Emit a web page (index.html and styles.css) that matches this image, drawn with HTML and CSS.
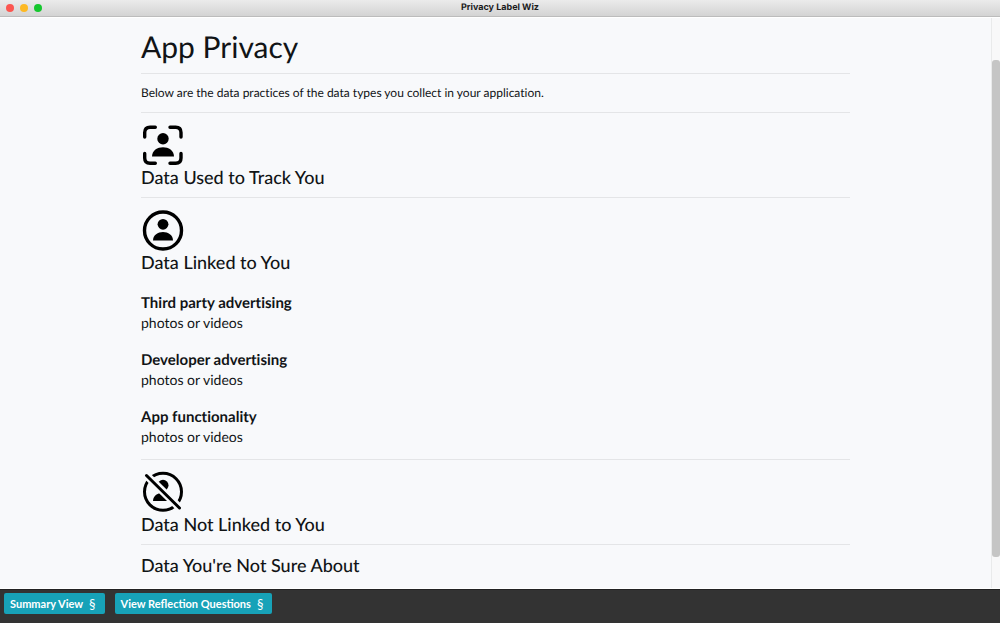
FILE: index.html
```html
<!DOCTYPE html>
<html lang="en">
<head>
<meta charset="utf-8">
<title>Privacy Label Wiz</title>
<link rel="stylesheet" href="styles.css">
</head>
<body>
<header class="titlebar">
  <div class="lights"><span class="light red"></span><span class="light amber"></span><span class="light green"></span></div>
  <div class="window-title">Privacy Label Wiz</div>
</header>
<div class="view">
  <main class="content">
    <h1 class="page-title">App Privacy</h1>
    <p class="intro">Below are the data practices of the data types you collect in your application.</p>
    <section class="section">
      <svg class="icon" viewBox="0 0 44 44" aria-hidden="true">
        <g fill="none" stroke="#000" stroke-width="3.400" stroke-linecap="round"><path d="M3.700 14V9.500Q3.700 4.200 9 4.200H14.300M29 4.200H34.700Q40 4.200 40 9.500V14M3.700 30.500V35Q3.700 40.300 9 40.300H14.300M29 40.300H34.700Q40 40.300 40 35V30.500"/></g>
        <circle cx="22" cy="15.800" r="5.700"/><path d="M11 33.500C11 21 33 21 33 33.500Z"/>
      </svg>
      <h2 class="heading">Data Used to Track You</h2>
    </section>
    <section class="section">
      <svg class="icon" viewBox="0 0 44 44" aria-hidden="true">
        <circle cx="22" cy="22.500" r="18.500" fill="none" stroke="#000" stroke-width="3.400"/>
        <circle cx="22" cy="16.300" r="5.400"/><path d="M12 32.500C12 21 32 21 32 32.500Z"/>
      </svg>
      <h2 class="heading">Data Linked to You</h2>
      <div class="uses">
        <div class="use"><h3 class="use-name">Third party advertising</h3><p class="use-data">photos or videos</p></div>
        <div class="use"><h3 class="use-name">Developer advertising</h3><p class="use-data">photos or videos</p></div>
        <div class="use"><h3 class="use-name">App functionality</h3><p class="use-data">photos or videos</p></div>
      </div>
    </section>
    <section class="section">
      <svg class="icon" viewBox="0 0 44 44" aria-hidden="true">
        <circle cx="22" cy="21.800" r="18.500" fill="none" stroke="#000" stroke-width="3"/>
        <circle cx="22" cy="15.300" r="5.500"/><path d="M12 31C12 20 32 20 32 31Z"/>
        <path d="M1 1L43 42" stroke="#f8f9fb" stroke-width="8"/>
        <path d="M5.500 5.500L38.500 38" stroke="#000" stroke-width="3" stroke-linecap="round"/>
      </svg>
      <h2 class="heading">Data Not Linked to You</h2>
    </section>
    <section class="section">
      <h2 class="heading">Data You're Not Sure About</h2>
    </section>
  </main>
  <div class="scrollbar" aria-hidden="true"><div class="thumb"></div></div>
</div>
<footer class="toolbar">
  <button class="btn" type="button">Summary View <span class="mark">§</span></button>
  <button class="btn" type="button">View Reflection Questions <span class="mark">§</span></button>
</footer>
</body>
</html>
```
FILE: styles.css
```css
* { box-sizing: border-box; }
body {
  margin: 0;
  height: 100vh;
  display: flex;
  flex-direction: column;
  overflow: hidden;
  background: #f8f9fb;
  color: #111416;
  font-family: Lato, "Open Sans", sans-serif;
  font-variant-ligatures: none;
  text-rendering: geometricPrecision;
}
h1, h2, h3, p { margin: 0; }
.titlebar {
  flex: none;
  height: 17px;
  display: grid;
  grid-template-columns: 1fr auto 1fr;
  align-items: center;
  padding: 0 6px;
  background: linear-gradient(#ebebeb, #d3d3d3);
  border-bottom: 1px solid #bcbcbc;
}
.lights { display: flex; gap: 6px; }
.light { width: 8px; height: 8px; border-radius: 50%; }
.red { background: #fc5650; }
.amber { background: #fdb924; }
.green { background: #15c72e; }
.window-title { font: bold 9px/14px Inter, sans-serif; color: #1b1b1b; }
.view { flex: 1; min-height: 0; display: flex; border-top: 1px solid #fff; border-bottom: 1px solid #fff; }
.content { flex: 1; padding: 10px 141px 0; overflow: hidden; }
.page-title { font-size: 30px; line-height: 38px; font-weight: 400; padding-bottom: 7px; }
.intro { font-size: 12px; line-height: 18px; padding: 10px 0; border-top: 1px solid #e4e5e7; }
.section { border-top: 1px solid #e4e5e7; padding: 10px 0; }
.icon { display: block; width: 44px; height: 44px; }
.heading { font-size: 18px; line-height: 20px; font-weight: 500; }
.uses { display: flex; flex-direction: column; gap: 17px; padding: 21px 0 2px; }
.use-name { font-size: 15px; line-height: 20px; font-weight: 700; }
.use-data { font-size: 14px; line-height: 20px; }
.scrollbar { flex: none; width: 9px; padding: 42px 0 31px; background: #f8f8f9; border-left: 1px solid #e9eaeb; }
.thumb { height: 100%; background: #c5c5c5; border-radius: 3px; }
.toolbar {
  flex: none;
  height: 34px;
  display: flex;
  align-items: flex-start;
  gap: 10px;
  padding: 3px 4px;
  background: #333;
  border-top: 1px solid #222;
}
.btn {
  height: 21px;
  display: flex;
  align-items: center;
  gap: 6px;
  padding: 0 9px 0 6px;
  border: 0;
  border-radius: 2px;
  background: #17a2b8;
  color: #fff;
  font: bold 11px/20px Lato, sans-serif;
}
.mark { font-weight: 400; font-size: 13px; }
```
